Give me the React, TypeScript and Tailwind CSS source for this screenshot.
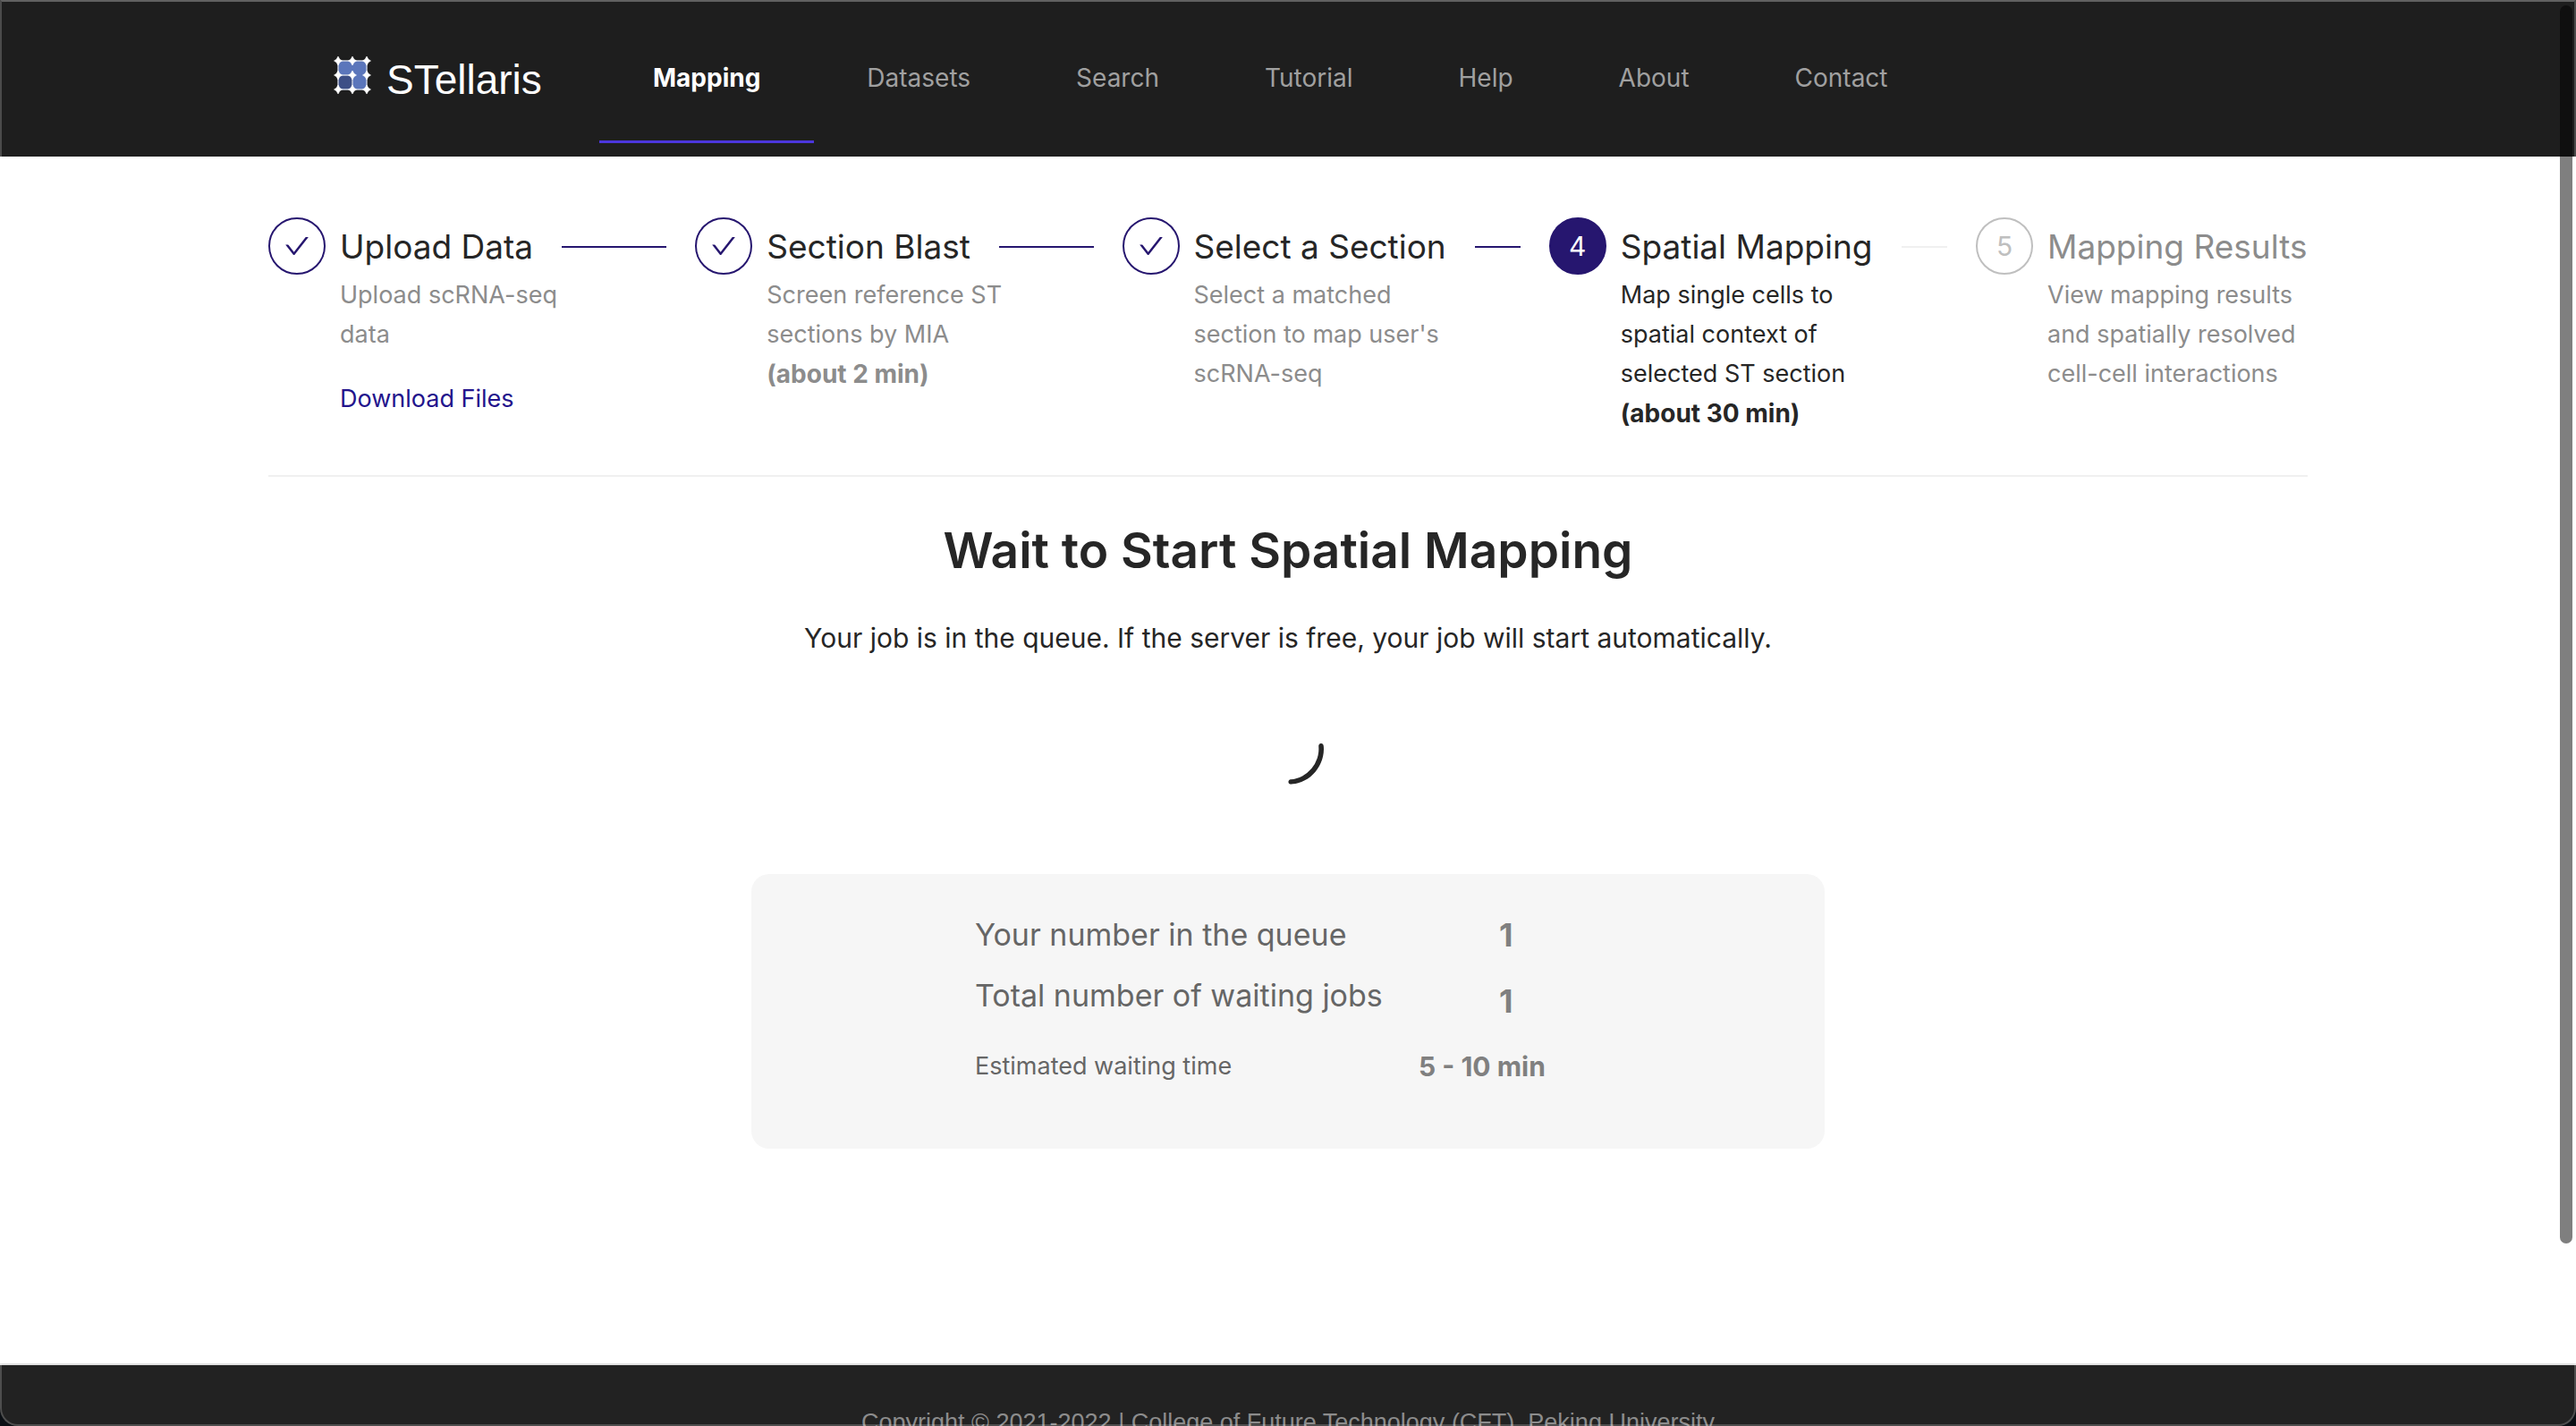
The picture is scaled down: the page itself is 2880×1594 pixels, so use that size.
import React from "react";
import { AiOutlineCheck, AiOutlineLoading } from "react-icons/ai";

const navItems = ["Mapping", "Datasets", "Search", "Tutorial", "Help", "About", "Contact"];

type StepStatus = "finish" | "process" | "wait";

interface Step {
  title: string;
  lines: string[];
  duration?: string;
  link?: string;
  status: StepStatus;
}

const steps: Step[] = [
  { title: "Upload Data", lines: ["Upload scRNA-seq", "data"], link: "Download Files", status: "finish" },
  { title: "Section Blast", lines: ["Screen reference ST", "sections by MIA"], duration: "(about 2 min)", status: "finish" },
  { title: "Select a Section", lines: ["Select a matched", "section to map user's", "scRNA-seq"], status: "finish" },
  { title: "Spatial Mapping", lines: ["Map single cells to", "spatial context of", "selected ST section"], duration: "(about 30 min)", status: "process" },
  { title: "Mapping Results", lines: ["View mapping results", "and spatially resolved", "cell-cell interactions"], status: "wait" },
];

const circleStyle: Record<StepStatus, string> = {
  finish: "border-[#26166f] text-[#26166f]",
  process: "border-[#26166f] bg-[#26166f] text-white",
  wait: "border-[#bfbfbf] text-[#bfbfbf]",
};

const titleStyle: Record<StepStatus, string> = {
  finish: "text-[#262626]",
  process: "text-[#262626]",
  wait: "text-[#8c8c8c]",
};

const bodyStyle: Record<StepStatus, string> = {
  finish: "text-[#8c8c8c]",
  process: "text-[#262626]",
  wait: "text-[#8c8c8c]",
};

const star = (x: number, y: number) =>
  `M${x} ${y - 5}L${x + 1.8} ${y - 1.8}L${x + 4.5} ${y}L${x + 1.8} ${y + 1.8}L${x} ${y + 5}L${x - 1.8} ${y + 1.8}L${x - 4.5} ${y}L${x - 1.8} ${y - 1.8}Z`;

function Logo() {
  const xs = [5, 21, 37];
  return (
    <svg viewBox="0 0 42 42" className="mb-[6px] size-[42px]" aria-hidden="true">
      <rect x="5" y="5" width="16" height="16" rx="3" fill="#5b76bb" />
      <rect x="21" y="5" width="16" height="32" rx="3" fill="#5b76bb" />
      <rect x="14" y="9" width="14" height="12" fill="#5b76bb" />
      <rect x="5" y="21" width="16" height="16" rx="3" fill="#3d4f86" />
      <path d="M5 5H37M5 21H21M5 37H37M5 5V37M21 21V37M37 5V37" stroke="#cdd3e4" strokeWidth="1.4" fill="none" />
      {xs.map((x) => xs.map((y) => <path key={`${x}-${y}`} d={star(x, y)} fill="#fff" stroke="#fff" strokeWidth="0.6" />))}
    </svg>
  );
}

function Header() {
  return (
    <header className="flex h-[175px] items-start bg-[#1e1e1e] pl-[373px]">
      <a href="#home" className="flex h-[174px] w-[297px] items-center gap-[17px] font-['Liberation_Sans',sans-serif] text-[46px] text-white">
        <Logo />
        <span className="pt-[4px]">STellaris</span>
      </a>
      <nav className="flex">
        {navItems.map((item, i) => (
          <a
            key={item}
            href={`#${item.toLowerCase()}`}
            className={
              i === 0
                ? "flex h-[160px] items-center border-b-[3px] border-[#4b36dc] px-[60px] pt-[17px] text-[28px] font-bold text-white"
                : "flex h-[160px] items-center border-b-[3px] border-transparent px-[59px] pt-[17px] text-[28px] text-[#a0a0a0]"
            }
          >
            {item}
          </a>
        ))}
      </nav>
    </header>
  );
}

function StepItem({ step, index, last }: { step: Step; index: number; last: boolean }) {
  return (
    <li className={last ? "flex w-[371px] flex-none gap-[16px]" : "flex flex-1 gap-[16px]"}>
      <div className={`flex size-[64px] flex-none items-center justify-center rounded-full border-2 text-[30px] ${circleStyle[step.status]}`}>
        {step.status === "finish" ? <AiOutlineCheck className="size-[32px]" /> : index + 1}
      </div>
      <div className="flex-1">
        <div className={`flex h-[65px] items-center gap-[32px] text-[37px] whitespace-nowrap ${titleStyle[step.status]}`}>
          <h2>{step.title}</h2>
          {!last && <span className={step.status === "finish" ? "h-[2px] flex-1 bg-[#26166f]" : "h-[2px] flex-1 bg-[#f0f0f0]"} />}
        </div>
        <div className={`text-[27px] leading-[44px] whitespace-nowrap ${bodyStyle[step.status]}`}>
          {step.lines.map((line) => (
            <p key={line}>{line}</p>
          ))}
          {step.duration && <p className="text-[28px] font-bold">{step.duration}</p>}
          {step.link && (
            <a href="#download" className="mt-[28px] block text-[#23148c]">
              {step.link}
            </a>
          )}
        </div>
      </div>
    </li>
  );
}

function QueueCard() {
  return (
    <section className="mx-auto mt-[100px] h-[307px] w-[1200px] rounded-[20px] bg-[#f6f6f6] pt-[34px] pl-[250px] text-[#666]">
      <dl className="grid w-[676px] grid-cols-[1fr_180px]">
        <dt className="h-[68px] text-[34px] leading-[68px]">Your number in the queue</dt>
        <dd className="h-[68px] pl-[90px] text-[36px] leading-[68px] font-bold text-[#808080]">1</dd>
        <dt className="h-[78px] text-[34px] leading-[68px]">Total number of waiting jobs</dt>
        <dd className="h-[78px] pl-[90px] text-[36px] leading-[80px] font-bold text-[#808080]">1</dd>
        <dt className="text-[27px] leading-[70px]">Estimated waiting time</dt>
        <dd className="text-[30px] leading-[70px] font-bold whitespace-nowrap text-[#808080]">5 - 10 min</dd>
      </dl>
    </section>
  );
}

export default function App() {
  return (
    <div className="relative h-screen overflow-hidden bg-white font-['Inter',sans-serif] text-[#262626]">
      <Header />
      <main className="mx-[300px] h-[1349px] pt-[68px]">
        <ol className="flex h-[288px] gap-[32px]">
          {steps.map((step, i) => (
            <StepItem key={step.title} step={step} index={i} last={i === steps.length - 1} />
          ))}
        </ol>
        <hr className="border-t-2 border-[#f0f0f0]" />
        <h1 className="mt-[42px] text-center text-[55px] leading-[80px] font-semibold">Wait to Start Spatial Mapping</h1>
        <p className="mt-[36px] text-center text-[30px] leading-[44px]">
          Your job is in the queue. If the server is free, your job will start automatically.
        </p>
        <AiOutlineLoading className="mx-auto mt-[62px] size-[80px] rotate-85" role="status" aria-label="Waiting" />
        <QueueCard />
      </main>
      <footer className="border-t-2 border-[#e0e0e0] bg-[#222] pt-[42px] pb-[100px] text-center font-['Liberation_Sans',sans-serif] text-[27px] leading-[44px] text-[#8c8c8c]">
        Copyright © 2021-2022 | College of Future Technology (CFT), Peking University
      </footer>
      <div className="pointer-events-none absolute inset-0 rounded-b-[20px] border-2 border-t-[#616161] border-r-white/20 border-b-white/20 border-l-white/20 shadow-[0_0_0_20px_#0b0f14]" />
      <div className="pointer-events-none absolute top-[6px] right-[4px] h-[1384px] w-[14px] rounded-full bg-black/50" />
    </div>
  );
}
